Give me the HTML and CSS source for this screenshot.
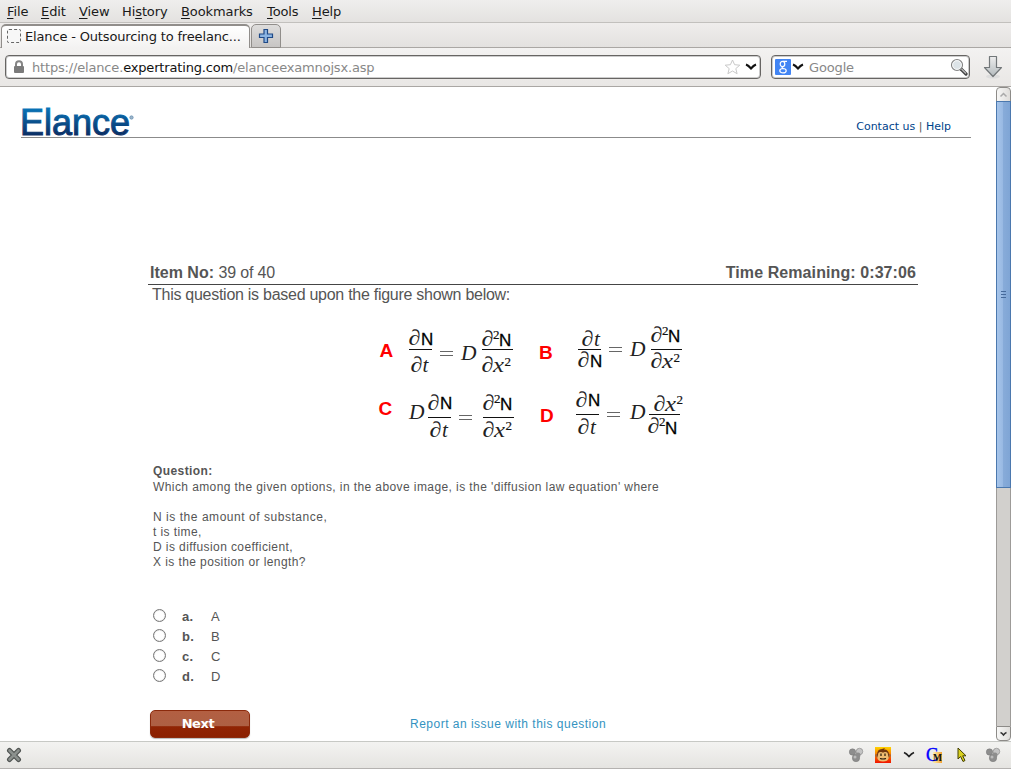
FILE: index.html
```html
<!DOCTYPE html>
<html lang="en">
<head>
<meta charset="utf-8">
<title>Elance - Outsourcing to freelancers</title>
<link rel="stylesheet" href="styles.css">
</head>
<body>
<nav class="menubar">
  <span class="m-file"><u>F</u>ile</span><span class="m-edit"><u>E</u>dit</span><span class="m-view"><u>V</u>iew</span><span class="m-history">Hi<u>s</u>tory</span><span class="m-bookmarks"><u>B</u>ookmarks</span><span class="m-tools"><u>T</u>ools</span><span><u>H</u>elp</span>
</nav>
<div class="tabs">
  <div class="tab"><i class="favicon"></i><span>Elance - Outsourcing to freelanc...</span></div>
  <div class="newtab"><svg width="16" height="16" viewBox="0 0 16 16"><path d="M6 1.500h3.500v4.500h5v3.500h-5v5H6v-5H1.500V6H6z" fill="#8bb4e2" stroke="#204a87" stroke-width="1.200"/></svg></div>
</div>
<div class="toolbar">
  <div class="field address">
    <svg class="lock" width="12" height="14" viewBox="0 0 12 14"><path d="M3 7V4.200a3 3 0 0 1 6 0V7" fill="none" stroke="#858585" stroke-width="2"/><rect x="1" y="6" width="10" height="7" rx="1" fill="#7b7b7b"/></svg>
    <span class="url">https://elance.<b>expertrating.com</b>/elanceexamnojsx.asp</span>
    <svg class="star" width="17" height="16" viewBox="0 0 17 16"><path d="M8.500 1l2.100 4.700 5.200.5-4 3.400 1.300 5.100-4.600-2.700-4.600 2.700 1.300-5.100-4-3.400 5.200-.5z" fill="#fff" stroke="#c9c9c9"/></svg>
    <svg class="chev" width="12" height="8" viewBox="0 0 12 8"><path d="M1 1.500q2.500 1 5 4q2.500-3 5-4" fill="none" stroke="#111" stroke-width="2"/></svg>
  </div>
  <div class="field search">
    <svg class="engine" width="16" height="16" viewBox="0 0 16 16"><rect width="16" height="16" rx="1" fill="#4285f4"/><g fill="none" stroke="#fff" stroke-width="1.200"><ellipse cx="7.500" cy="5" rx="2.300" ry="2.700"/><path d="M8 2.300h4M8.500 7.500q-3 1.500 0 2.300"/><ellipse cx="8" cy="11.700" rx="3.200" ry="2.200"/></g></svg>
    <svg class="chev2" width="12" height="8" viewBox="0 0 12 8"><path d="M1 1.500q2.500 1 5 4q2.500-3 5-4" fill="none" stroke="#111" stroke-width="2"/></svg>
    <span class="placeholder">Google</span>
    <svg class="lens" width="18" height="18" viewBox="0 0 18 18"><path d="M11 11l5 5" stroke="#444" stroke-width="3.200" stroke-linecap="round"/><path d="M11.500 11l4.500 4.500" stroke="#bbb" stroke-width="1.200"/><circle cx="7" cy="7" r="5.500" fill="#dce3e7" stroke="#858585" stroke-width="1.200"/><circle cx="7" cy="7" r="4.300" fill="none" stroke="#f8f8f8"/></svg>
  </div>
  <svg class="download" width="20" height="24" viewBox="0 0 20 24"><defs><linearGradient id="arrow" x2="0" y2="1"><stop stop-color="#eee"/><stop offset="1" stop-color="#b3babd"/></linearGradient></defs><ellipse cx="10" cy="21.500" rx="7" ry="2" fill="#ddd"/><path d="M6.500 1.500h7v11h5L10 21.500 1.500 12.500h5z" fill="url(#arrow)" stroke="#727779" stroke-width="1.200" stroke-linejoin="round"/></svg>
</div>
<div class="viewport">
  <main class="page">
    <header class="site-header">
      <svg class="logo" width="116" height="30" viewBox="0 0 116 30"><defs><linearGradient id="ink" x2="0" y2="1"><stop offset=".15" stop-color="#0874b8"/><stop offset=".9" stop-color="#0b2559"/></linearGradient></defs><text x="-1" y="28" textLength="110" lengthAdjust="spacingAndGlyphs" fill="url(#ink)" stroke="url(#ink)" stroke-width="1" font-family="Liberation Sans, sans-serif" font-size="36">Elance</text><circle cx="110.500" cy="10.500" r="1.700" fill="#9eb6cc" stroke="#517ea5" stroke-width=".6"/></svg>
      <div class="links"><a>Contact us</a> | <a>Help</a></div>
    </header>
    <div class="exam-bar"><span><b>Item No:</b> <span class="count">39 of 40</span></span><b class="timer">Time Remaining: 0:37:06</b></div>
    <p class="intro">This question is based upon the figure shown below:</p>
    <svg class="figure" width="330" height="130" viewBox="370 315 330 130">
      <g class="label"><text x="379.500" y="357">A</text><text x="539" y="358.500">B</text><text x="378.500" y="415">C</text><text x="540" y="421.500">D</text></g>
      <g class="math">
        <text x="408.500" y="345" textLength="12" lengthAdjust="spacingAndGlyphs">∂</text><text x="410.500" y="372" textLength="12" lengthAdjust="spacingAndGlyphs">∂</text><text class="it" x="422.500" y="372">t</text><text class="it" x="461" y="360" textLength="15.500" lengthAdjust="spacingAndGlyphs">D</text><text x="481.500" y="346" textLength="12" lengthAdjust="spacingAndGlyphs">∂</text><text x="481.500" y="372" textLength="12" lengthAdjust="spacingAndGlyphs">∂</text><text class="it" x="493" y="372" textLength="11" lengthAdjust="spacingAndGlyphs">x</text>
        <text x="581.500" y="346" textLength="12" lengthAdjust="spacingAndGlyphs">∂</text><text class="it" x="594" y="346">t</text><text x="577.500" y="367" textLength="12" lengthAdjust="spacingAndGlyphs">∂</text><text class="it" x="630" y="356" textLength="15.500" lengthAdjust="spacingAndGlyphs">D</text><text x="650.500" y="342" textLength="12" lengthAdjust="spacingAndGlyphs">∂</text><text x="650.500" y="368" textLength="12" lengthAdjust="spacingAndGlyphs">∂</text><text class="it" x="662" y="368" textLength="11" lengthAdjust="spacingAndGlyphs">x</text>
        <text class="it" x="409" y="419" textLength="15.500" lengthAdjust="spacingAndGlyphs">D</text><text x="427.500" y="410" textLength="12" lengthAdjust="spacingAndGlyphs">∂</text><text x="429.500" y="437" textLength="12" lengthAdjust="spacingAndGlyphs">∂</text><text class="it" x="442" y="437">t</text><text x="482.500" y="410" textLength="12" lengthAdjust="spacingAndGlyphs">∂</text><text x="482.500" y="437" textLength="12" lengthAdjust="spacingAndGlyphs">∂</text><text class="it" x="494" y="437" textLength="11" lengthAdjust="spacingAndGlyphs">x</text>
        <text x="575.500" y="407" textLength="12" lengthAdjust="spacingAndGlyphs">∂</text><text x="577.500" y="434" textLength="12" lengthAdjust="spacingAndGlyphs">∂</text><text class="it" x="590" y="434">t</text><text class="it" x="630" y="419" textLength="15.500" lengthAdjust="spacingAndGlyphs">D</text><text x="653.500" y="411" textLength="12" lengthAdjust="spacingAndGlyphs">∂</text><text class="it" x="665" y="411" textLength="11" lengthAdjust="spacingAndGlyphs">x</text><text x="647.500" y="433" textLength="12" lengthAdjust="spacingAndGlyphs">∂</text>
      </g>
      <g class="sup"><text x="493" y="339">2</text><text x="504.500" y="366">2</text><text x="662" y="335">2</text><text x="673.500" y="362">2</text><text x="494" y="403">2</text><text x="505.500" y="430">2</text><text x="676.500" y="404">2</text><text x="659" y="426">2</text></g>
      <g class="sub-n"><text x="421" y="345">N</text><text x="499" y="346">N</text><text x="590" y="367">N</text><text x="668" y="342">N</text><text x="440" y="409">N</text><text x="500" y="410">N</text><text x="588" y="406">N</text><text x="665" y="434">N</text></g>
      <path class="rules" d="M409 349.500h23M482 349.500h31M578 349.500h23M651 349.500h31M428 417.500h23M483 417.500h31M576 414.500h23M649 414.500h31"/>
      <path class="equals" d="M440 351.500h13M440 355.500h13M609 347.500h13M609 351.500h13M459 415.500h13M459 419.500h13M607 412.500h13M607 416.500h13"/>
    </svg>
    <section class="question">
      <b>Question:</b>
      <p class="ask">Which among the given options, in the above image, is the 'diffusion law equation' where</p>
      <p class="amount">N is the amount of substance,</p><p>t is time,</p><p>D is diffusion coefficient,</p><p>X is the position or length?</p>
    </section>
    <div class="answers">
      <label><i class="radio"></i><b>a.</b><span>A</span></label><label><i class="radio"></i><b>b.</b><span>B</span></label><label><i class="radio"></i><b>c.</b><span>C</span></label><label><i class="radio"></i><b>d.</b><span>D</span></label>
    </div>
    <div class="actions"><button class="next">Next</button><a class="report">Report an issue with this question</a></div>
  </main>
  <div class="scrollbar">
    <div class="step up"><svg width="9" height="6" viewBox="0 0 9 6"><path d="M1.500 4.500l3-3 3 3" fill="none" stroke="#aaa" stroke-width="1.500"/></svg></div>
    <div class="thumb"><i></i></div>
    <div class="track"></div>
    <div class="step down"><svg width="9" height="6" viewBox="0 0 9 6"><path d="M1.500 1.500q1.500.5 3 2.500 1.500-2 3-2.500" fill="none" stroke="#333" stroke-width="1.500"/></svg></div>
  </div>
</div>
<footer class="status">
  <svg width="16" height="16" viewBox="0 0 16 16"><path d="M3.500 3.500l9 9m0-9l-9 9" stroke="#505452" stroke-width="5" stroke-linecap="round"/><path d="M3.500 3.500l9 9m0-9l-9 9" stroke="#8b908d" stroke-width="2.600" stroke-linecap="round"/></svg>
  <div class="addons">
    <svg class="balls" width="16" height="16" viewBox="0 0 16 16"><g fill="#8d8d8d" stroke="#777" stroke-width=".5"><circle cx="4.500" cy="5" r="3.200"/><circle cx="8" cy="11" r="3.700"/><circle cx="11.500" cy="4.500" r="3.300" fill="#c4c4c4"/><circle cx="10" cy="8" r="2.500" stroke="none"/></g><circle cx="7" cy="10" r="1.500" fill="#bbb"/></svg>
    <svg class="monkey" width="16" height="16" viewBox="0 0 16 16"><defs><linearGradient id="flame" x2="0" y2="1"><stop stop-color="#ffd400"/><stop offset="1" stop-color="#f01400"/></linearGradient></defs><rect width="16" height="16" fill="url(#flame)"/><circle cx="1.800" cy="8.500" r="1.700" fill="#ae642b"/><circle cx="14.200" cy="8.500" r="1.700" fill="#ae642b"/><path d="M2 8Q2 2 7 2l3-1-1 1.500q5 0 5 5.500 0 6-6 6T2 8z" fill="#713710"/><path d="M3 8Q3 5 5.500 5T8 6q0-1 2.500-1T13 8l.8 3q-1 3.500-5.800 3.500T2.200 11z" fill="#efbc72"/><path d="M6 6.500v2.500M10 6.500v2.500M5 11.500q3 1 6 0" fill="none" stroke="#24180a" stroke-width="1.200"/></svg>
    <svg class="drop" width="12" height="8" viewBox="0 0 12 8"><path d="M1 1.500q2.500 1 5 4q2.500-3 5-4" fill="none" stroke="#222" stroke-width="1.700"/></svg>
    <svg class="cm" width="17" height="16" viewBox="0 0 17 16"><defs><linearGradient id="gold"><stop stop-color="#fff0b0"/><stop offset="1" stop-color="#f5a030"/></linearGradient></defs><rect x="7" y="5" width="9" height="11" fill="url(#gold)"/><text x="0" y="14" font-family="Liberation Serif, serif" font-size="19" textLength="12" lengthAdjust="spacingAndGlyphs" fill="#00f" stroke="#00f" stroke-width=".4">C</text><text x="7" y="13.500" font-family="Liberation Serif, serif" font-size="10" font-weight="bold" textLength="9" lengthAdjust="spacingAndGlyphs" fill="#111">M</text></svg>
    <svg class="pointer" width="10" height="16" viewBox="0 0 10 16"><path d="M1 1v11l2.600-2.500L6 14.500l2-1-2.300-4.700H9z" fill="#d8d020" stroke="#444000"/></svg>
    <svg width="16" height="16" viewBox="0 0 16 16"><g fill="#8d8d8d" stroke="#777" stroke-width=".5"><circle cx="4.500" cy="5" r="3.200"/><circle cx="8" cy="11" r="3.700"/><circle cx="11.500" cy="4.500" r="3.300" fill="#c4c4c4"/><circle cx="10" cy="8" r="2.500" stroke="none"/></g><circle cx="7" cy="10" r="1.500" fill="#bbb"/></svg>
  </div>
</footer>
</body>
</html>
```
FILE: styles.css
```css
* { box-sizing: border-box; }
html, body { margin: 0; height: 100%; }
body { display: flex; flex-direction: column; height: 769px; overflow: hidden; background: #fff; font-family: "DejaVu Sans", sans-serif; font-size: 13px; color: #1a1a1a; }
p { margin: 0; }
svg { display: block; flex: none; }
.menubar { display: flex; flex: none; height: 23px; padding-left: 7px; line-height: 23px; background: linear-gradient(#efeeed, #e4e2e0); border-bottom: 1px solid #c2c0bd; letter-spacing: -.1px; }
.menubar span { flex: none; }
.menubar u { text-underline-offset: 2px; }
.menubar .m-file { width: 34px; }
.menubar .m-edit { width: 38px; }
.menubar .m-view { width: 43px; }
.menubar .m-history { width: 59px; }
.menubar .m-bookmarks { width: 86px; }
.menubar .m-tools { width: 45px; }
.tabs { display: flex; flex: none; align-items: flex-end; gap: 1px; height: 25px; padding-left: 1px; background: linear-gradient(#efedec, #e3e1df); box-shadow: inset 0 -1px #aaa7a4; }
.tab { display: flex; align-items: center; gap: 4px; width: 249px; height: 24px; padding: 0 0 2px 5px; border: 1px solid #918e8b; border-top-width: 2px; border-bottom: 0; border-radius: 5px 5px 0 0; background: linear-gradient(#fff, #f3f2f1); white-space: nowrap; letter-spacing: -.16px; }
.favicon { width: 14px; height: 14px; border: 1px dashed #666; border-radius: 2px; background: #f7f7f7; }
.newtab { display: grid; place-items: center; width: 30px; height: 24px; border: 1px solid #918e8b; border-radius: 5px 5px 0 0; background: linear-gradient(#dedddc, #c7c5c4); }
.toolbar { display: flex; flex: none; height: 39px; padding: 7px 8px 0 5px; background: linear-gradient(#f3f2f1, #e9e7e5); border-bottom: 1px solid #aaa7a4; }
.field { display: flex; align-items: center; height: 24px; border: 1px solid #676563; border-radius: 4px; background: #fff; box-shadow: inset 0 0 0 1px #ccc; color: #888; }
.address { width: 756px; padding: 0 3px 0 7px; }
.url { flex: 1; padding-left: 7px; letter-spacing: -.17px; }
.url b { font-weight: normal; color: #111; }
.chev { margin-left: 4px; }
.search { width: 199px; margin-left: 10px; padding: 0 1px 0 3px; }
.chev2 { margin-left: 1px; }
.placeholder { flex: 1; padding-left: 5px; letter-spacing: -.15px; }
.download { margin: 0 0 0 13px; }
.viewport { display: flex; flex: none; height: 654px; }
.page { width: 996px; overflow: hidden; color: #555; }
.site-header { display: flex; justify-content: space-between; width: 950px; height: 51px; margin-left: 21px; padding-top: 20px; border-bottom: 1px solid #8b8b8b; }
.logo, .cm { overflow: visible; }
.links { padding: 12px 20px 0 0; color: #555; font-size: 11px; line-height: 15px; white-space: nowrap; }
.links a { color: #00438a; }
.exam-bar { display: flex; justify-content: space-between; width: 770px; height: 24px; margin: 123px 0 0 148px; padding: 2px 2px 0 2px; border-bottom: 1px solid #454545; font: 16px/20px "Liberation Sans", sans-serif; }
.count { letter-spacing: -.15px; }
.timer { letter-spacing: .09px; }
.intro { margin-left: 152px; font: 16px/20px "Liberation Sans", sans-serif; letter-spacing: -.27px; }
.figure { margin: 10px 0 0 370px; }
.figure .label { fill: #f00; font: bold 19px "Liberation Sans", sans-serif; }
.math { fill: #222; font: 22px "Liberation Serif", serif; }
.math .it { font-style: italic; font-size: 21px; }
.sup { fill: #111; stroke: #111; stroke-width: .2px; font: 13px "Liberation Serif", serif; }
.sub-n { fill: #000; font: 17px "Liberation Sans", sans-serif; stroke: #000; stroke-width: .3px; }
.rules { stroke: #111; fill: none; }
.equals { stroke: #666; fill: none; }
.question { margin: 18px 0 0 153px; font: 12px/15px "Liberation Sans", sans-serif; letter-spacing: .41px; white-space: nowrap; }
.question b { display: block; line-height: 16px; }
.question .ask { padding-top: 1px; margin-bottom: 15px; }
.question .amount { letter-spacing: .54px; }
.answers { margin: 36px 0 0 153px; font: 13px/20px "Liberation Sans", sans-serif; }
.answers label { display: flex; align-items: center; height: 20px; }
.radio { width: 13px; height: 13px; margin-top: -1px; border: 1px solid #777; border-radius: 50%; background: #fff; box-shadow: inset 0 0 1px #999; }
.answers b { width: 29px; margin-left: 16px; padding-top: 1px; letter-spacing: .3px; }
.answers span { padding-top: 1px; }
.actions { display: flex; align-items: flex-start; margin: 24px 0 0 150px; }
.next { width: 100px; height: 28px; padding: 0 4px 2px 0; border: 1px solid #8b2a0c; border-radius: 5px; background: linear-gradient(#b35f42 0, #ad6044 58%, #902404 60%, #8b2000); box-shadow: 0 1px 1px #bbb; color: #fff; font: bold 13px "DejaVu Sans", sans-serif; letter-spacing: -.4px; }
.report { margin-left: 160px; padding-top: 6px; color: #3493c1; font: 12px/16px "Liberation Sans", sans-serif; letter-spacing: .49px; }
.scrollbar { display: flex; flex-direction: column; width: 15px; }
.step { display: grid; place-items: center; height: 15px; border: 1px solid #8d8b88; background: linear-gradient(90deg, #f7f7f6, #dfddda); }
.up { border-radius: 4px 4px 0 0; }
.down { border-radius: 0 0 4px 4px; }
.thumb { display: grid; place-items: center; height: 387px; margin-top: -1px; border: 1px solid #4b78ae; background: linear-gradient(90deg, #a7c5ea, #98b9e3 45%, #87abd9 50%, #7fa5d5); }
.thumb i { width: 5px; height: 7px; background: repeating-linear-gradient(#466a9b 0 1px, transparent 1px 3px); }
.track { flex: 1; background: #d2d0cd; border: solid #9d9b98; border-width: 0 1px; }
.status { display: flex; flex: none; align-items: center; justify-content: space-between; height: 28px; padding: 0 10px 0 6px; border-top: 1px solid #c7c9c5; border-bottom: 1px solid #b4b2b0; background: linear-gradient(#f3f3f1, #e5e4e1); }
.addons { display: flex; align-items: center; }
.monkey { margin-left: 11px; }
.drop { margin-left: 12px; }
.cm { margin-left: 11px; }
.pointer { margin: 0 18px 0 14px; }
```
